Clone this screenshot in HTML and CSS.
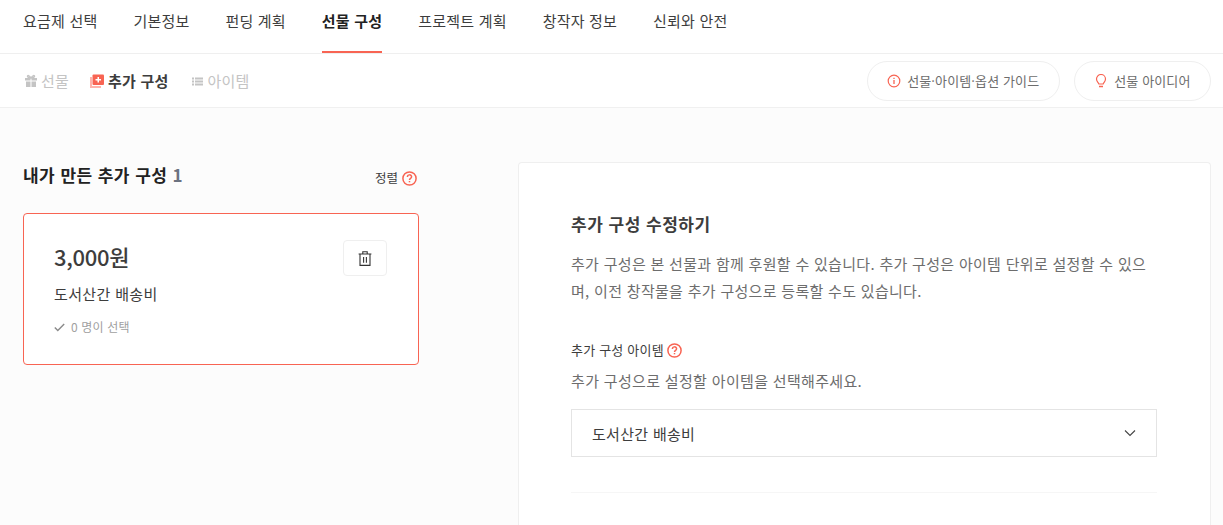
FILE: index.html
```html
<!DOCTYPE html>
<html lang="ko">
<head>
<meta charset="utf-8">
<title>선물 구성</title>
<link rel="stylesheet" href="styles.css">
</head>
<body>
<nav class="tabs">
  <a class="tab">요금제 선택</a>
  <a class="tab">기본정보</a>
  <a class="tab">펀딩 계획</a>
  <a class="tab active">선물 구성</a>
  <a class="tab">프로젝트 계획</a>
  <a class="tab">창작자 정보</a>
  <a class="tab">신뢰와 안전</a>
</nav>
<div class="subbar">
  <div class="subtabs">
    <a class="subtab">
      <svg class="sub-icon" viewBox="0 0 14 14" width="14" height="14"><path fill="#c4c4c4" d="M1 4h5.500v2.500H1zM7.500 4H13v2.500H7.500zM2 7.500h4.500V13H2zM7.500 7.500H12V13H7.500z"/><path fill="none" stroke="#c4c4c4" stroke-width="1.300" d="M7 4C5.500 1 3 1 3.500 2.500S6 4 7 4c1 0 3 0 3.500-1.500S8.500 1 7 4z"/></svg>
      선물
    </a>
    <a class="subtab current">
      <svg class="sub-icon" viewBox="0 0 14 14" width="14" height="14"><path fill="#ffb3ab" d="M0 3h2v9h9v2H0z"/><rect x="2.500" y="0.500" width="11.500" height="10.500" rx="1" fill="#f86453"/><path fill="#fff" d="M7.500 3h1.500v2h2v1.500H9v2H7.500v-2h-2V5h2z"/></svg>
      추가 구성
    </a>
    <a class="subtab">
      <svg class="sub-icon" viewBox="0 0 13 12" width="13" height="12"><path fill="#c4c4c4" d="M1 2.500h2v2H1zM4 2.500h8v2H4zM1 5.500h2v2H1zM4 5.500h8v2H4zM1 8.500h2v2H1zM4 8.500h8v2H4z"/></svg>
      아이템
    </a>
  </div>
  <div class="guides">
    <a class="pill">
      <svg viewBox="0 0 14 14" width="14" height="14"><circle cx="7" cy="7" r="5.800" fill="none" stroke="#f86453" stroke-width="1.200"/><path stroke="#f86453" stroke-width="1.300" d="M7 6v4M7 3.700v1.300"/></svg>
      선물·아이템·옵션 가이드
    </a>
    <a class="pill">
      <svg viewBox="0 0 14 14" width="14" height="14"><path fill="none" stroke="#f86453" stroke-width="1.200" d="M4.800 10C4.500 8.500 2.500 7.500 2.500 5a4.500 4.500 0 0 1 9 0c0 2.500-2 3.500-2.300 5z"/><path stroke="#f86453" stroke-width="1.500" d="M5 12.500h4"/></svg>
      선물 아이디어
    </a>
  </div>
</div>
<main class="content">
  <section class="left">
    <div class="left-head">
      <h2 class="left-title">내가 만든 추가 구성 <span class="count">1</span></h2>
      <div class="sort">정렬
        <svg class="help" viewBox="0 0 15 15" width="15" height="15"><circle cx="7.500" cy="7.500" r="6.600" fill="none" stroke="#f86453" stroke-width="1.500"/><path fill="none" stroke="#f86453" stroke-width="1.500" d="M5.400 6c0-2.800 4.200-2.800 4.200-.2 0 1.500-2.100 1.500-2.100 3.200"/><path stroke="#f86453" stroke-width="1.500" d="M7.500 10v1.300"/></svg>
      </div>
    </div>
    <article class="card">
      <div class="card-body">
        <div class="price">3,000원</div>
        <div class="card-name">도서산간 배송비</div>
        <div class="chosen">
          <svg viewBox="0 0 11 9" width="11" height="9"><path fill="none" stroke="#8a8a8a" stroke-width="1.400" d="M.8 4.500l3 3L10.200 1"/></svg>
          0 명이 선택
        </div>
      </div>
      <button class="trash" type="button" aria-label="삭제">
        <svg viewBox="0 0 14 15" width="14" height="15"><path fill="none" stroke="#333" stroke-width="1.100" d="M.6 3h12.800M2 3v11.400h10V3M4.800 3V.8h4.400V3M5.600 6v5.700M8.400 6v5.700"/></svg>
      </button>
    </article>
  </section>
  <section class="panel">
    <h3 class="panel-title">추가 구성 수정하기</h3>
    <p class="panel-desc">추가 구성은 본 선물과 함께 후원할 수 있습니다. 추가 구성은 아이템 단위로 설정할 수 있으며, 이전 창작물을 추가 구성으로 등록할 수도 있습니다.</p>
    <div class="field-label">추가 구성 아이템
      <svg class="help" viewBox="0 0 15 15" width="15" height="15"><circle cx="7.500" cy="7.500" r="6.600" fill="none" stroke="#f86453" stroke-width="1.500"/><path fill="none" stroke="#f86453" stroke-width="1.500" d="M5.400 6c0-2.800 4.200-2.800 4.200-.2 0 1.500-2.100 1.500-2.100 3.200"/><path stroke="#f86453" stroke-width="1.500" d="M7.500 10v1.300"/></svg>
    </div>
    <p class="field-hint">추가 구성으로 설정할 아이템을 선택해주세요.</p>
    <div class="select">
      <span>도서산간 배송비</span>
      <svg viewBox="0 0 12 8" width="12" height="8"><path fill="none" stroke="#444" stroke-width="1.100" d="M1 1.500l5 5 5-5"/></svg>
    </div>
    <hr class="rule">
  </section>
</main>
</body>
</html>
```
FILE: styles.css
```css
* { box-sizing: border-box; }
html, body { margin: 0; height: 525px; overflow: hidden; }
body {
  background: #fcfcfc;
  color: #3d3d3d;
  font-family: "Noto Sans CJK KR", "Noto Sans", sans-serif;
}
.tabs {
  display: flex;
  gap: 36px;
  height: 54px;
  padding-left: 23px;
  background: #fff;
  border-bottom: 1px solid #efefef;
}
.tab {
  height: 53px;
  padding-top: 10px;
  font-size: 15px;
  line-height: 22px;
  letter-spacing: .2px;
  color: #3d3d3d;
}
.tab.active {
  font-weight: 700;
  color: #222;
  border-bottom: 2px solid #f86453;
}
.subbar {
  display: flex;
  justify-content: space-between;
  align-items: center;
  height: 54px;
  padding: 0 12px 0 24px;
  background: #fff;
  border-bottom: 1px solid #f0f0f0;
}
.subtabs { display: flex; gap: 21px; }
.subtab {
  display: flex;
  align-items: center;
  gap: 3px;
  font-size: 15px;
  letter-spacing: .2px;
  color: #c4c4c4;
}
.subtab.current { font-weight: 700; color: #3d3d3d; gap: 4px; margin-right: 2px; }
.guides { display: flex; gap: 14px; }
.pill {
  display: flex;
  align-items: center;
  gap: 6px;
  height: 40px;
  padding: 0 19.500px;
  border: 1px solid #efefef;
  border-radius: 20px;
  background: #fff;
  font-size: 13px;
  letter-spacing: .12px;
  color: #6d6d6d;
}
.content {
  display: flex;
  padding: 54px 0 0 23px;
}
.left { width: 396px; flex: none; }
.left-head {
  display: flex;
  justify-content: space-between;
  align-items: flex-end;
  height: 32px;
  margin-bottom: 19px;
}
.left-title {
  margin: 0 0 7px;
  font-size: 17px;
  line-height: 24px;
  font-weight: 700;
  letter-spacing: .45px;
  color: #222;
}
.count { color: #6b7280; }
.sort {
  display: flex;
  align-items: center;
  gap: 4px;
  padding-right: 2px;
  margin-bottom: 6px;
  font-size: 12.500px;
  line-height: 20px;
  color: #3d3d3d;
}
.card {
  display: flex;
  justify-content: space-between;
  align-items: flex-start;
  height: 152px;
  padding: 26px 31px 0 30px;
  background: #fff;
  border: 1px solid #f86453;
  border-radius: 4px;
}
.price {
  font-size: 22px;
  line-height: 32px;
  font-weight: 500;
  letter-spacing: -.3px;
  color: #3d3d3d;
}
.card-name {
  margin-top: 11px;
  font-size: 15px;
  line-height: 22px;
  letter-spacing: .35px;
  color: #3d3d3d;
}
.chosen {
  display: flex;
  align-items: center;
  gap: 6px;
  margin-top: 13px;
  font-size: 12px;
  line-height: 18px;
  letter-spacing: .15px;
  color: #a0a0a0;
}
.trash {
  display: flex;
  align-items: center;
  justify-content: center;
  width: 44px;
  height: 36px;
  padding: 0;
  background: #fff;
  border: 1px solid #efefef;
  border-radius: 4px;
}
.panel {
  width: 693px;
  height: 363px;
  margin-left: 99px;
  padding: 48px 53px 0 52px;
  background: #fff;
  border: 1px solid #efefef;
  border-bottom: 0;
  border-radius: 4px 4px 0 0;
}
.panel-title {
  margin: 0;
  font-size: 17px;
  line-height: 26px;
  font-weight: 700;
  letter-spacing: .5px;
  color: #3d3d3d;
}
.panel-desc {
  margin: 13px 0 0;
  font-size: 15px;
  line-height: 27px;
  letter-spacing: .3px;
  color: #6d6d6d;
}
.field-label {
  display: flex;
  align-items: center;
  gap: 3px;
  margin-top: 36px;
  font-size: 13px;
  line-height: 20px;
  letter-spacing: .2px;
  color: #3d3d3d;
}
.field-hint {
  margin: 10px 0 0;
  font-size: 15px;
  line-height: 22px;
  letter-spacing: .33px;
  color: #6d6d6d;
}
.select {
  display: flex;
  justify-content: space-between;
  align-items: center;
  height: 48px;
  margin-top: 17px;
  padding: 0 20px;
  border: 1px solid #e4e4e4;
  font-size: 15px;
  letter-spacing: .3px;
  color: #3d3d3d;
}
.rule {
  margin: 35px 0 0;
  border: 0;
  border-top: 1px solid #f6f6f6;
}
```
